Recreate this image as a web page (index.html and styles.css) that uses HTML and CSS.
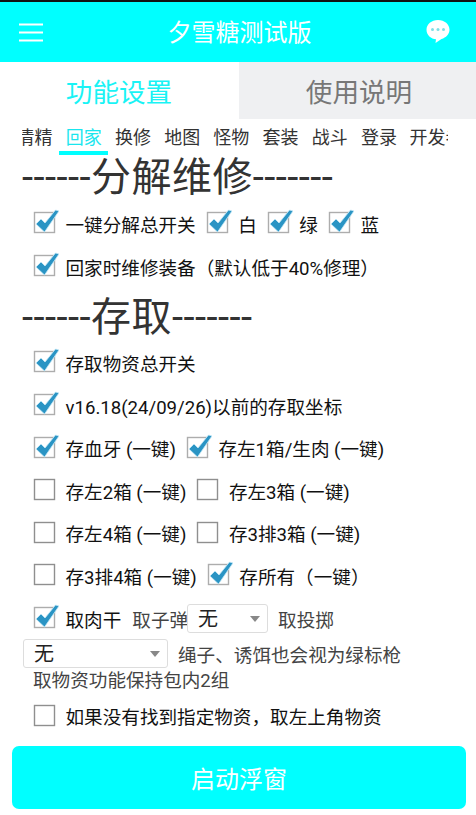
FILE: index.html
```html
<html>
<head>
  <title>夕雪糖测试版</title>
  <link rel="stylesheet" href="styles.css">
</head>
<body>
  <svg class="hidden">
    <symbol id="box-on" viewBox="0 0 26 26">
      <rect x="1.500" y="4.500" width="20" height="20" fill="#fff" stroke="#adadad" stroke-width="1.400"/>
      <path d="M3 16L8 11L12 15L22.500 2L26 3L11.500 24Z" fill="#2a94c4" stroke="#c4e8f6" stroke-width=".8"/>
    </symbol>
    <symbol id="box-off" viewBox="0 0 26 26">
      <rect x="1.500" y="4.500" width="20" height="20" fill="#fff" stroke="#8f8f8f" stroke-width="1.400"/>
    </symbol>
  </svg>

  <div class="header">
    <svg class="menu-icon" viewBox="0 0 24 19">
      <path d="M0 1.500H24M0 9.500H24M0 17.500H24" stroke="#fff" stroke-width="2"/>
    </svg>
    <div class="title">夕雪糖测试版</div>
    <svg class="chat-icon" viewBox="0 0 24 24">
      <path d="M12 1C5.500 1 .5 5.300 .5 10.700C.5 16 5 20 10 20.300L9.500 24L15.500 19.900C20 18.700 23.500 15.100 23.500 10.700C23.500 5.300 18.500 1 12 1Z" fill="#fff"/>
      <circle cx="6.500" cy="10.500" r="1.500" fill="#7fdfe6"/>
      <circle cx="12" cy="10.500" r="1.500" fill="#7fdfe6"/>
      <circle cx="17.500" cy="10.500" r="1.500" fill="#7fdfe6"/>
    </svg>
  </div>

  <div class="tabs">
    <div class="tab active">功能设置</div>
    <div class="tab">使用说明</div>
  </div>

  <div class="subtabs">
    <div class="subtab first">清精</div>
    <div class="subtab current">回家</div>
    <div class="subtab">换修</div>
    <div class="subtab">地图</div>
    <div class="subtab">怪物</div>
    <div class="subtab">套装</div>
    <div class="subtab">战斗</div>
    <div class="subtab">登录</div>
    <div class="subtab last">开发者</div>
  </div>

  <div class="content">
    <h2 class="heading first-heading">------分解维修-------</h2>
    <div class="row">
      <label class="opt"><svg class="box"><use href="#box-on"/></svg>一键分解总开关</label>
      <label class="opt"><svg class="box"><use href="#box-on"/></svg>白</label>
      <label class="opt"><svg class="box"><use href="#box-on"/></svg>绿</label>
      <label class="opt"><svg class="box"><use href="#box-on"/></svg>蓝</label>
    </div>
    <div class="row">
      <label class="opt"><svg class="box"><use href="#box-on"/></svg>回家时维修装备（默认低于40%修理）</label>
    </div>

    <h2 class="heading second-heading">------存取-------</h2>
    <div class="row">
      <label class="opt"><svg class="box"><use href="#box-on"/></svg>存取物资总开关</label>
    </div>
    <div class="row">
      <label class="opt"><svg class="box"><use href="#box-on"/></svg>v16.18(24/09/26)以前的存取坐标</label>
    </div>
    <div class="row">
      <label class="opt"><svg class="box"><use href="#box-on"/></svg>存血牙 (一键)</label>
      <label class="opt"><svg class="box"><use href="#box-on"/></svg>存左1箱/生肉 (一键)</label>
    </div>
    <div class="row">
      <label class="opt"><svg class="box"><use href="#box-off"/></svg>存左2箱 (一键)</label>
      <label class="opt"><svg class="box"><use href="#box-off"/></svg>存左3箱 (一键)</label>
    </div>
    <div class="row">
      <label class="opt"><svg class="box"><use href="#box-off"/></svg>存左4箱 (一键)</label>
      <label class="opt"><svg class="box"><use href="#box-off"/></svg>存3排3箱 (一键)</label>
    </div>
    <div class="row">
      <label class="opt"><svg class="box"><use href="#box-off"/></svg>存3排4箱 (一键)</label>
      <label class="opt"><svg class="box"><use href="#box-on"/></svg>存所有（一键）</label>
    </div>
    <div class="row">
      <label class="opt"><svg class="box"><use href="#box-on"/></svg>取肉干</label>
      <span class="muted">取子弹</span>
      <div class="select small">无</div>
      <span class="muted after-select">取投掷</span>
    </div>
    <div class="select-row">
      <div class="select wide">无</div>
      <span class="muted">绳子、诱饵也会视为绿标枪</span>
    </div>
    <div class="note">取物资功能保持包内2组</div>
    <div class="row last-row">
      <label class="opt"><svg class="box"><use href="#box-off"/></svg>如果没有找到指定物资，取左上角物资</label>
    </div>
  </div>

  <button class="start">启动浮窗</button>
</body>
</html>
```

FILE: styles.css
```css
html, body { margin: 0; padding: 0; }
body { width: 476px; height: 815px; overflow: hidden; background: #fff; color: #111;
  font-family: Roboto, "Noto Sans CJK SC", sans-serif; font-size: 18.6px; }
.hidden { display: none; }

.header { height: 60px; border-top: 2px solid #111; background: #00ffff; display: flex;
  align-items: center; justify-content: space-between; padding: 0 26px 0 19px; }
.title { color: #fff; font-size: 24px; margin: 0 0 4px 10px; }
.menu-icon { width: 24px; height: 19px; }
.chat-icon { width: 24px; height: 24px; margin-top: -3px; }

.tabs { display: flex; height: 57px; }
.tab { flex: 1; display: flex; align-items: center; justify-content: center;
  font-size: 26.6px; color: #777; background: #eff0f2; padding: 0 0 1px 3px; }
.tab.active { flex: none; width: 238px; box-sizing: border-box; margin-right: 1px; padding: 0 0 1px; color: #19f3f5; background: #fff; }

.subtabs { display: flex; height: 36px; margin: 0 28px 0 22px; overflow: hidden; }
.subtab { flex: none; width: 49.2px; box-sizing: border-box; text-align: center; font-size: 18px;
  line-height: 38px; white-space: nowrap; color: #333; }
.subtab.first { margin-left: -12px; }
.subtab.current { color: #19e6ee; border-bottom: 4px solid #00ffff; }
.subtab.last { width: 66px; }

.heading { margin: 0 0 0 22px; font-size: 40px; font-weight: normal; letter-spacing: .45px;
  color: #333; white-space: nowrap; }
.first-heading { height: 47.2px; line-height: 46px; }
.second-heading { height: 46.8px; line-height: 48px; margin-top: 7px; }

.row { display: flex; align-items: center; height: 42.6px; padding-left: 34px; gap: 11px; white-space: nowrap; }
.opt { display: flex; align-items: center; gap: 10.500px; }
.box { width: 26px; height: 26px; margin: -4px -4px 0 -1px; flex: none; }
.muted { color: #444; }

.select { position: relative; box-sizing: border-box; height: 29px; border: 1px solid #ddd;
  border-radius: 3px; background: #fff; font-size: 20px; line-height: 28px; padding-left: 10px; color: #222; }
.select:after { content: ""; position: absolute; right: 7px; top: 11px; border: 5px solid transparent;
  border-top: 6px solid #888; border-bottom: 0; }
.select.small { width: 81px; margin-left: -12px; }
.after-select { margin-left: -1px; }
.select-row { display: flex; align-items: center; gap: 10px; margin: -1px 0 0 23px; height: 31px; white-space: nowrap; }
.select.wide { width: 145px; }
.note { margin-left: 33px; height: 25px; line-height: 25px; color: #444; }
.last-row { height: 43px; }

.start { display: block; width: 454px; height: 63px; margin: 8.500px 0 0 12px; border: none; border-radius: 7px;
  background: #00ffff; color: #fff; font-family: inherit; font-size: 24px; }
```
